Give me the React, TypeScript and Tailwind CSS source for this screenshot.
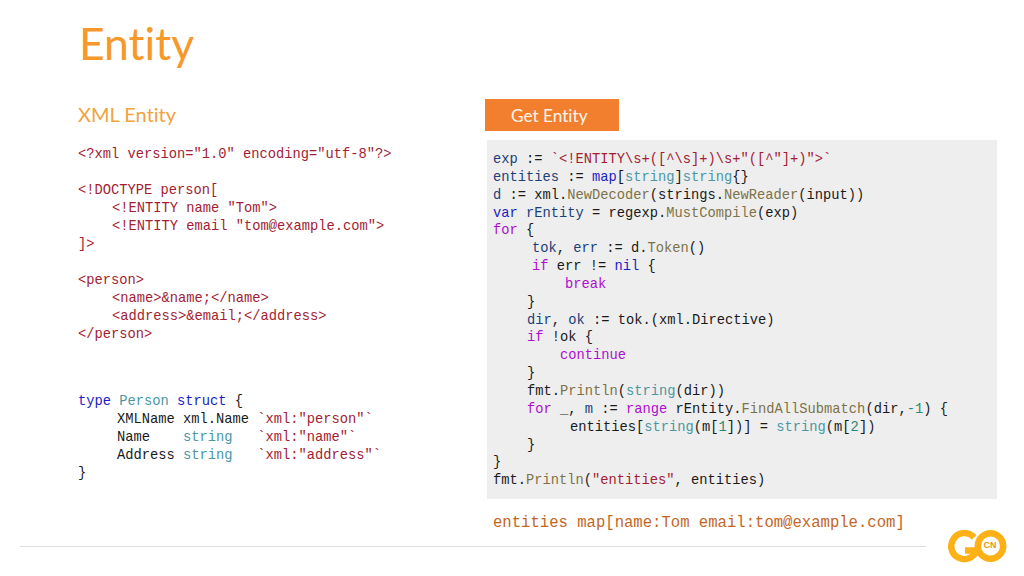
const mono = 'font-["Liberation_Mono",monospace] text-[13.75px] whitespace-pre'
const red = 'text-[#a31d33]'
const key = 'text-[#1c1cc4]'
const teal = 'text-[#4a97a3]'
const fn = 'text-[#7d7247]'
const pur = 'text-[#ad10cf]'
const vari = 'text-[#1c3f78]'
const num = 'text-[#2b8a6b]'

type Tok = [string, string?]
type Line = { pad?: string; toks: Tok[] }

const xmlLines: Line[] = [
  { toks: [['<?xml version="1.0" encoding="utf-8"?>', red]] },
  { toks: [[' ']] },
  { toks: [['<!DOCTYPE person[', red]] },
  { pad: 'pl-[34px]', toks: [['<!ENTITY name "Tom">', red]] },
  { pad: 'pl-[34px]', toks: [['<!ENTITY email "tom@example.com">', red]] },
  { toks: [[']>', red]] },
  { toks: [[' ']] },
  { toks: [['<person>', red]] },
  { pad: 'pl-[34px]', toks: [['<name>&name;</name>', red]] },
  { pad: 'pl-[34px]', toks: [['<address>&email;</address>', red]] },
  { toks: [['</person>', red]] },
]

const structLines: Line[] = [
  { toks: [['type', key], [' '], ['Person', teal], [' '], ['struct', key], [' {']] },
  { pad: 'pl-[39px]', toks: [['XMLName xml.Name '], ['`xml:"person"`', red]] },
  { pad: 'pl-[39px]', toks: [['Name    '], ['string', teal], ['   '], ['`xml:"name"`', red]] },
  { pad: 'pl-[39px]', toks: [['Address '], ['string', teal], ['   '], ['`xml:"address"`', red]] },
  { toks: [['}']] },
]

const codeLines: Line[] = [
  { toks: [['exp', vari], [' := '], ['`<!ENTITY\\s+([^\\s]+)\\s+"([^"]+)">`', red]] },
  { toks: [['entities', vari], [' := '], ['map', key], ['['], ['string', teal], [']'], ['string', teal], ['{}']] },
  { toks: [['d', vari], [' := xml.'], ['NewDecoder', fn], ['(strings.'], ['NewReader', fn], ['(input))']] },
  { toks: [['var', key], [' '], ['rEntity', vari], [' = regexp.'], ['MustCompile', fn], ['(exp)']] },
  { toks: [['for', pur], [' {']] },
  { pad: 'pl-[39px]', toks: [['tok', vari], [', '], ['err', vari], [' := d.'], ['Token', fn], ['()']] },
  { pad: 'pl-[39px]', toks: [['if', pur], [' err != '], ['nil', key], [' {']] },
  { pad: 'pl-[72px]', toks: [['break', pur]] },
  { pad: 'pl-[34px]', toks: [['}']] },
  { pad: 'pl-[34px]', toks: [['dir', vari], [', '], ['ok', vari], [' := tok.(xml.Directive)']] },
  { pad: 'pl-[34px]', toks: [['if', pur], [' !ok {']] },
  { pad: 'pl-[67px]', toks: [['continue', pur]] },
  { pad: 'pl-[34px]', toks: [['}']] },
  { pad: 'pl-[34px]', toks: [['fmt.'], ['Println', fn], ['('], ['string', teal], ['(dir))']] },
  { pad: 'pl-[34px]', toks: [['for', pur], [' _, '], ['m', vari], [' := '], ['range', pur], [' rEntity.'], ['FindAllSubmatch', fn], ['(dir,'], ['-1', num], [') {']] },
  { pad: 'pl-[77px]', toks: [['entities['], ['string', teal], ['(m['], ['1', num], ['])] = '], ['string', teal], ['(m['], ['2', num], ['])']] },
  { pad: 'pl-[34px]', toks: [['}']] },
  { toks: [['}']] },
  { toks: [['fmt.'], ['Println', fn], ['('], ['"entities"', red], [', entities)']] },
]

function Code({ lines, leading }: { lines: Line[]; leading: string }) {
  return (
    <div className={`${mono} ${leading} text-[#1a1a1a]`}>
      {lines.map((line, i) => (
        <div key={i} className={line.pad}>
          {line.toks.map((t, j) => (
            <span key={j} className={t[1]}>{t[0]}</span>
          ))}
        </div>
      ))}
    </div>
  )
}

function GoLogo() {
  return (
    <div className="relative w-[60px] h-[36px]">
      <svg width="60" height="36" viewBox="0 0 60 36" fill="none">
        <path d="M26 7.5A13 13 0 1 0 28.5 20.5H17" stroke="#fdb116" strokeWidth="6.5" />
        <circle cx="42.5" cy="16" r="12.7" stroke="#fdb116" strokeWidth="6.5" />
      </svg>
      <span className='absolute left-[35.5px] top-[10px] font-["Liberation_Sans",sans-serif] text-[9px] leading-[11px] font-bold text-[#e8960f]'>CN</span>
    </div>
  )
}

export default function App() {
  return (
    <div className="w-[1024px] h-[576px] bg-white overflow-hidden flex flex-col [font-variant-ligatures:none]">
      <h1 className='shrink-0 pl-[79px] pt-[15px] h-[99px] font-["Lato",sans-serif] text-[44.5px] leading-[56px] text-[#f7982a]'>
        Entity
      </h1>
      <div className="flex flex-1 min-h-0">
        <div className="w-[485px] pl-[78px]">
          <div className='h-[32px] font-["Lato",sans-serif] text-[20px] leading-[30px] text-[#f0a340]'>
            XML Entity
          </div>
          <div className="pt-[15px]">
            <Code lines={xmlLines} leading="leading-[18px]" />
          </div>
          <div className="pt-[49px]">
            <Code lines={structLines} leading="leading-[18px]" />
          </div>
        </div>
        <div className="flex-1">
          <div className='w-[134px] h-[32px] pl-[26px] bg-[#f27f2e] font-["Lato",sans-serif] text-[17.2px] leading-[33px] text-[#fdf3ea]'>
            Get Entity
          </div>
          <div className="ml-[2px] mt-[9px] w-[510px] h-[359px] bg-[#eeeeee] pl-[6px] pt-[11px]">
            <Code lines={codeLines} leading="leading-[17.85px]" />
          </div>
          <div className='ml-[8px] mt-[14px] font-["Liberation_Mono",monospace] text-[15.6px] leading-[20px] whitespace-pre text-[#c4661f]'>
            entities map[name:Tom email:tom@example.com]
          </div>
        </div>
      </div>
      <div className="shrink-0 h-[46px] flex items-start">
        <div className="ml-[20px] mt-[16px] w-[906px] h-px bg-[#dddddd]" />
        <div className="ml-[22px]">
          <GoLogo />
        </div>
      </div>
    </div>
  )
}
